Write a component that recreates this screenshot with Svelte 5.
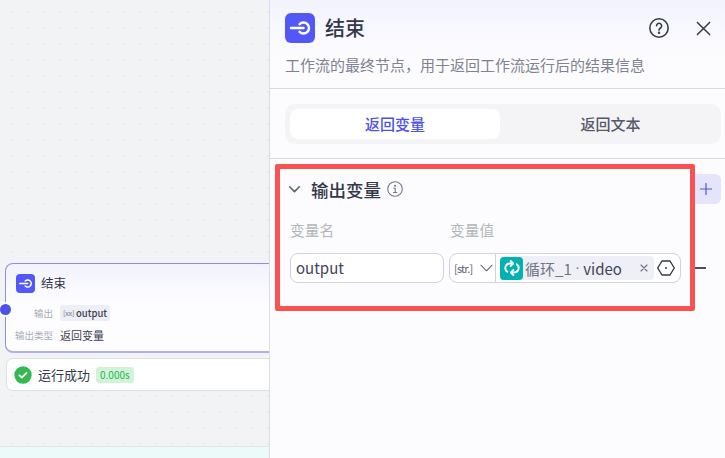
<script>
  let tab = $state('var');
</script>

{#snippet endIcon()}
  <svg viewBox="0 0 30 30" fill="none" stroke="#fff" stroke-width="2.5" stroke-linecap="round">
    <path d="M6 15h12.500" />
    <path d="M14.600 11.100a5.500 5.500 0 1 1 0 7.800" />
  </svg>
{/snippet}

<div class="page">
  <div class="canvas">
    <div class="node">
      <span class="port"></span>
      <div class="node-head">
        <span class="node-icon">{@render endIcon()}</span>
        <span class="node-title">结束</span>
      </div>
      <div class="node-row first">
        <span class="node-label">输出</span>
        <span class="node-tag"><i>[xx]</i>output</span>
      </div>
      <div class="node-row">
        <span class="node-label">输出类型</span>
        <span class="node-value">返回变量</span>
      </div>
    </div>
    <div class="status">
      <svg class="check" viewBox="0 0 18 18">
        <circle cx="9" cy="9" r="8.700" fill="#34b851" />
        <path d="M5.400 9.300l2.500 2.400 4.600-4.800" fill="none" stroke="#fff" stroke-width="1.800" stroke-linecap="round" stroke-linejoin="round" />
      </svg>
      <span class="status-text">运行成功</span>
      <span class="time">0.000s</span>
    </div>
    <div class="strip"></div>
  </div>

  <aside class="panel">
    <header class="head">
      <div class="title-row">
        <span class="logo">{@render endIcon()}</span>
        <h1>结束</h1>
        <svg class="help" viewBox="0 0 24 24" fill="none" stroke="#33384a" stroke-width="1.700" stroke-linecap="round">
          <circle cx="12" cy="12" r="10" />
          <path d="M9.300 9.600a2.800 2.800 0 1 1 4.300 2.400c-1 .6-1.600 1.200-1.600 2.300" />
          <circle cx="12" cy="17.200" r=".5" fill="#33384a" />
        </svg>
        <svg class="close" viewBox="0 0 16 16" fill="none" stroke="#33384a" stroke-width="1.600" stroke-linecap="round">
          <path d="M1.500 1.500l13 13M14.500 1.500l-13 13" />
        </svg>
      </div>
      <p>工作流的最终节点，用于返回工作流运行后的结果信息</p>
    </header>

    <div class="tabs-wrap">
      <div class="tabs">
        <button class:active={tab === 'var'} onclick={() => (tab = 'var')}>返回变量</button>
        <button class:active={tab === 'text'} onclick={() => (tab = 'text')}>返回文本</button>
      </div>
    </div>

    <section class="body">
      <div class="sec-head">
        <svg class="chev" viewBox="0 0 12 8" fill="none" stroke="#5d6478" stroke-width="1.500" stroke-linecap="round" stroke-linejoin="round">
          <path d="M1.500 1.500L6 6l4.500-4.500" />
        </svg>
        <h2>输出变量</h2>
        <svg class="info" viewBox="0 0 16 16" fill="none" stroke="#70768a" stroke-width="1.100" stroke-linecap="round">
          <circle cx="8" cy="8" r="7.300" />
          <path d="M6.800 7.200H8.200V11.500M6.500 11.500h3.200" />
          <circle cx="8" cy="4.700" r=".5" fill="#70768a" />
        </svg>
        <span class="add">
          <svg viewBox="0 0 12 12" fill="none" stroke="#4d53e8" stroke-width="1.200" stroke-linecap="round">
            <path d="M6 .5v11M.5 6h11" />
          </svg>
        </span>
      </div>

      <div class="labels">
        <span class="l-name">变量名</span>
        <span>变量值</span>
      </div>

      <div class="fields">
        <div class="input">output</div>
        <div class="value">
          <div class="type">
            <span>[str.]</span>
            <svg viewBox="0 0 14 8" fill="none" stroke="#5d6275" stroke-width="1.100" stroke-linecap="round" stroke-linejoin="round">
              <path d="M1 1l6 6 6-6" />
            </svg>
          </div>
          <div class="ref">
            <div class="chip">
              <span class="loop">
                <svg viewBox="0 0 16 16" fill="none" stroke="#fff" stroke-width="1.700" stroke-linecap="round" stroke-linejoin="round">
                  <path d="M8.500 4H6a4 4 0 0 0-2.200 7.300" />
                  <path d="M6.800 1.800L9 4 6.800 6.200" />
                  <path d="M7.500 12H10a4 4 0 0 0 2.200-7.300" />
                  <path d="M9.200 9.800L7 12l2.200 2.200" />
                </svg>
              </span>
              <span class="chip-name">循环_1</span>
              <span class="dot">·</span>
              <span class="chip-var">video</span>
              <svg class="x" viewBox="0 0 8 8" fill="none" stroke="#6b7183" stroke-width="1.100" stroke-linecap="round">
                <path d="M1 1l6 6M7 1L1 7" />
              </svg>
            </div>
            <svg class="hex" viewBox="0 0 18 16" fill="none" stroke="#33384a" stroke-width="1.400" stroke-linejoin="round">
              <path d="M5 1h8l4.300 7-4.300 7H5L.7 8z" />
              <circle cx="9" cy="8" r="1" fill="#33384a" stroke="none" />
            </svg>
          </div>
        </div>
        <span class="minus"></span>
      </div>
    </section>

    <div class="highlight"></div>
  </aside>
</div>

<style>
  :global(body) {
    font-family: "Noto Sans CJK SC", "Noto Sans", sans-serif;
    overflow: hidden;
  }

  .page {
    display: flex;
    width: 725px;
    height: 458px;
    overflow: hidden;
    color: #33384a;
  }

  .canvas {
    position: relative;
    width: 269px;
    flex: none;
    background-color: #f2f3f5;
    background-image: radial-gradient(#e9eaee 1px, transparent 1px);
    background-size: 16px 16px;
    background-position: 4px 4px;
  }

  .node {
    position: absolute;
    left: 5px;
    top: 263px;
    width: 280px;
    height: 90px;
    box-sizing: border-box;
    border: 1px solid #8f8ee6;
    border-bottom: 2px solid #aeaef0;
    border-radius: 8px;
    background: linear-gradient(#f2f2fe, #fdfdff 45%);
    padding: 9px 10px;
  }

  .port {
    position: absolute;
    left: -6px;
    top: 40px;
    width: 11px;
    height: 11px;
    border-radius: 50%;
    background: #4d53e8;
    box-shadow: 0 0 0 2px #fff;
  }

  .node-head {
    display: flex;
    align-items: center;
    gap: 6px;
    height: 20px;
  }

  .node-icon {
    width: 19px;
    height: 19px;
    border-radius: 4px;
    background: #5257f5;
    display: flex;
  }

  .node-title {
    font-size: 12.500px;
    line-height: 20px;
    color: #2f3342;
  }

  .node-row {
    display: flex;
    align-items: center;
    height: 22px;
    gap: 7px;
    font-size: 9.500px;
    white-space: nowrap;
  }

  .node-row.first {
    margin-top: 9px;
  }

  .node-label {
    width: 38px;
    margin-left: -1px;
    text-align: right;
    color: #a8acb8;
  }

  .node-tag {
    display: flex;
    align-items: center;
    gap: 2px;
    height: 16px;
    padding: 0 3px;
    border-radius: 3px;
    background: #eeeff6;
    color: #3b4052;
    font-size: 9.500px;
    font-weight: 500;
  }

  .node-tag i {
    width: 11px;
    font-style: normal;
    font-size: 7px;
    letter-spacing: -.3px;
    color: #8b90a3;
  }

  .node-value {
    font-size: 11px;
    color: #3b4052;
  }

  .status {
    position: absolute;
    left: 6px;
    top: 358px;
    width: 280px;
    height: 33px;
    box-sizing: border-box;
    display: flex;
    align-items: center;
    padding-left: 7px;
    border: 1px solid #dfe0e6;
    border-radius: 7px;
    background: #fff;
  }

  .check {
    width: 18px;
    height: 18px;
    margin-right: 6px;
  }

  .status-text {
    font-size: 13px;
    color: #33384a;
    margin-right: 6px;
  }

  .time {
    height: 16px;
    line-height: 16px;
    padding: 0 4px;
    border-radius: 3px;
    background: #d2f3da;
    color: #22b84c;
    font-size: 10px;
  }

  .strip {
    position: absolute;
    left: 0;
    right: 0;
    bottom: 0;
    height: 11px;
    border-top: 1px solid #e1e4ea;
    background: #edfafa;
  }

  .panel {
    position: relative;
    flex: 1;
    box-sizing: border-box;
    border-left: 1px solid #dcdde6;
    background: #fcfcff;
    z-index: 1;
  }

  .head {
    height: 89px;
    box-sizing: border-box;
    padding: 13px 15px 0;
    border-bottom: 1px solid #d7d8e4;
    background: linear-gradient(#f3f3fe, #fcfcff 65%);
  }

  .title-row {
    display: flex;
    align-items: center;
    height: 30px;
  }

  .logo {
    width: 30px;
    height: 30px;
    border-radius: 6px;
    background: #5257f7;
    display: flex;
  }

  h1 {
    margin: 0 0 0 10px;
    flex: 1;
    font-size: 20px;
    font-weight: 500;
    line-height: 30px;
    color: #33384a;
  }

  .help {
    width: 22px;
    height: 22px;
    margin-right: 26px;
  }

  .close {
    width: 15px;
    height: 15px;
    margin-right: -1px;
  }

  .head p {
    margin: 12px 0 0;
    font-size: 15px;
    line-height: 20px;
    color: #7e8291;
  }

  .tabs-wrap {
    height: 70px;
    box-sizing: border-box;
    padding: 15px 4px 0 15px;
    border-bottom: 1px solid #d7d8e4;
  }

  .tabs {
    display: flex;
    height: 40px;
    box-sizing: border-box;
    padding: 5px 0 5px 5px;
    border-radius: 10px;
    background: #f4f4f7;
  }

  .tabs button {
    flex: 1;
    border: 0;
    padding: 0;
    border-radius: 8px;
    background: transparent;
    font: 500 15px/30px "Noto Sans CJK SC", sans-serif;
    color: #55596a;
  }

  .tabs button.active {
    flex: none;
    width: 210px;
    background: #fff;
    color: #4d53e8;
  }

  .body {
    padding: 14px 0 0 20px;
    display: flex;
    flex-direction: column;
  }

  .sec-head {
    display: flex;
    align-items: center;
    height: 32px;
  }

  .chev {
    width: 13px;
    height: 9px;
    margin-left: -2px;
  }

  h2 {
    margin: 0 6px 0 10px;
    font-size: 17.500px;
    font-weight: 500;
    color: #33384a;
  }

  .info {
    width: 16px;
    height: 16px;
  }

  .add {
    width: 30px;
    height: 30px;
    margin-left: auto;
    margin-right: 4px;
    border-radius: 6px;
    background: #e4e5fd;
    display: flex;
    align-items: center;
    justify-content: center;
  }

  .add svg {
    width: 12px;
    height: 12px;
  }

  .labels {
    display: flex;
    margin-top: 14px;
    font-size: 14.700px;
    line-height: 22px;
    color: #b4b6be;
  }

  .l-name {
    width: 160px;
  }

  .fields {
    display: flex;
    align-items: center;
    margin-top: 12px;
  }

  .input {
    width: 154px;
    height: 30px;
    box-sizing: border-box;
    padding-left: 5px;
    border: 1px solid #cfd0e0;
    border-radius: 8px;
    background: #fff;
    font-size: 15px;
    line-height: 28px;
    color: #3f4457;
  }

  .value {
    display: flex;
    width: 232px;
    height: 30px;
    box-sizing: border-box;
    margin-left: 5px;
    border: 1px solid #cfd0e0;
    border-radius: 8px;
    background: #fff;
  }

  .type {
    width: 46px;
    flex: none;
    box-sizing: border-box;
    display: flex;
    align-items: center;
    gap: 8px;
    padding-left: 4px;
    border-right: 1px solid #cfd0e0;
    font-size: 11px;
    letter-spacing: -.8px;
    color: #5d6275;
  }

  .type svg {
    width: 13px;
    height: 8px;
  }

  .ref {
    flex: 1;
    display: flex;
    align-items: center;
    padding-left: 4px;
  }

  .chip {
    display: flex;
    align-items: center;
    width: 154px;
    height: 24px;
    border-radius: 4px;
    background: #eeeff7;
    font-size: 15px;
  }

  .loop {
    width: 23px;
    height: 23px;
    flex: none;
    border-radius: 4px;
    background: #00b2b2;
    display: flex;
    align-items: center;
    justify-content: center;
  }

  .loop svg {
    width: 18px;
    height: 18px;
  }

  .chip-name {
    margin-left: 2px;
    color: #6f7484;
  }

  .dot {
    margin: 0 4px;
    font-family: "Noto Sans", sans-serif;
    font-size: 13px;
    color: #6f7484;
  }

  .chip-var {
    color: #3f4457;
  }

  .x {
    width: 8px;
    height: 8px;
    margin-left: auto;
    margin-right: 6px;
  }

  .hex {
    width: 18px;
    height: 16px;
    margin-left: 3px;
  }

  .minus {
    width: 12px;
    height: 1.500px;
    margin-left: 13px;
    background: #4a4f60;
  }

  .highlight {
    position: absolute;
    left: 5px;
    top: 164px;
    width: 420px;
    height: 147px;
    box-sizing: border-box;
    border: 5px solid #fa5151;
    border-radius: 2px;
    pointer-events: none;
  }
</style>
